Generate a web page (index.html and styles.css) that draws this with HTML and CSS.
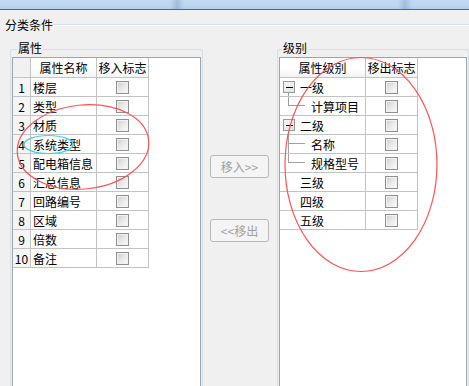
FILE: index.html
```html
<!DOCTYPE html>
<html>
<head>
<meta charset="utf-8">
<link rel="stylesheet" href="styles.css">
</head>
<body>
<div class="window">
  <div class="titlebar"></div>
  <div class="outer-head"><span class="outer-title">分类条件</span><span class="outer-rule"></span></div>
  <div class="groups">
    <section class="group group-left">
      <div class="group-head"><span class="gh-corner"></span><span class="gh-label">属性</span><span class="gh-rule"></span></div>
      <div class="group-body">
        <div class="listview">
          <div class="grid grid-left">
            <div class="hd rh"></div><div class="hd">属性名称</div><div class="hd">移入标志</div>
            <div class="rh">1</div><div class="name">楼层</div><div class="flag"><span class="chk"></span></div>
            <div class="rh">2</div><div class="name">类型</div><div class="flag"><span class="chk"></span></div>
            <div class="rh">3</div><div class="name">材质</div><div class="flag"><span class="chk"></span></div>
            <div class="rh">4</div><div class="name">系统类型</div><div class="flag"><span class="chk"></span></div>
            <div class="rh">5</div><div class="name">配电箱信息</div><div class="flag"><span class="chk"></span></div>
            <div class="rh">6</div><div class="name">汇总信息</div><div class="flag"><span class="chk"></span></div>
            <div class="rh">7</div><div class="name">回路编号</div><div class="flag"><span class="chk"></span></div>
            <div class="rh">8</div><div class="name">区域</div><div class="flag"><span class="chk"></span></div>
            <div class="rh">9</div><div class="name">倍数</div><div class="flag"><span class="chk"></span></div>
            <div class="rh">10</div><div class="name">备注</div><div class="flag"><span class="chk"></span></div>
          </div>
        </div>
      </div>
    </section>
    <div class="middle">
      <button class="btn" disabled>移入&gt;&gt;</button>
      <button class="btn" disabled>&lt;&lt;移出</button>
    </div>
    <section class="group group-right">
      <div class="group-head"><span class="gh-corner"></span><span class="gh-label">级别</span><span class="gh-rule"></span></div>
      <div class="group-body">
        <div class="listview">
          <div class="grid grid-right">
            <div class="hd">属性级别</div><div class="hd">移出标志</div>

            <div class="lvl"><span class="toggle"><i class="sp"></i><span class="box"><i class="minus"></i></span><i class="stem"></i></span><span class="txt parent">一级</span></div>
            <div class="flag"><span class="chk"></span></div>

            <div class="lvl"><span class="elbow"><i class="up"></i><i class="down"></i></span><span class="txt child">计算项目</span></div>
            <div class="flag"><span class="chk"></span></div>

            <div class="lvl"><span class="toggle"><i class="sp"></i><span class="box"><i class="minus"></i></span><i class="stem"></i></span><span class="txt parent">二级</span></div>
            <div class="flag"><span class="chk"></span></div>

            <div class="lvl"><span class="elbow tee"><i class="up"></i><i class="down"></i></span><span class="txt child">名称</span></div>
            <div class="flag"><span class="chk"></span></div>

            <div class="lvl"><span class="elbow"><i class="up"></i><i class="down"></i></span><span class="txt child">规格型号</span></div>
            <div class="flag"><span class="chk"></span></div>

            <div class="lvl leaf"><span class="txt">三级</span></div>
            <div class="flag"><span class="chk"></span></div>

            <div class="lvl leaf"><span class="txt">四级</span></div>
            <div class="flag"><span class="chk"></span></div>

            <div class="lvl leaf"><span class="txt">五级</span></div>
            <div class="flag"><span class="chk"></span></div>
          </div>
        </div>
      </div>
    </section>
  </div>
  <svg class="marks" width="469" height="386" viewBox="0 0 469 386">
    <ellipse cx="83" cy="147" rx="66" ry="42" transform="rotate(-6 83 147)" fill="none" stroke="#ff5252" stroke-width="1.2"/>
    <ellipse cx="48.5" cy="144.5" rx="24.5" ry="9" fill="none" stroke="#3fd3e0" stroke-width="1.2"/>
    <ellipse cx="361" cy="164.5" rx="76" ry="107" fill="none" stroke="#ff5252" stroke-width="1.2"/>
  </svg>
</div>
</body>
</html>
```

FILE: styles.css
```css
* { box-sizing: border-box; }
html, body { margin: 0; padding: 0; }
body {
  background: #f0f0f0;
  font-family: "Noto Sans CJK SC", "Noto Sans", sans-serif;
  font-size: 12px;
  color: #000;
}
.window {
  position: relative;
  width: 469px;
  height: 386px;
  overflow: hidden;
  background: #f0f0f0;
}
.titlebar {
  height: 10px;
  border-bottom: 1px solid #5d6670;
  background:
    linear-gradient(90deg, transparent 170px, rgba(110,140,180,.35) 177px, transparent 184px, transparent 398px, rgba(110,140,180,.35) 405px, transparent 412px),
    linear-gradient(#c4daf3, #bcd5f1 60%, #b3cfee);
}
.outer-head {
  display: flex;
  margin-top: 8px;
  height: 14px;
  line-height: 14px;
}
.outer-title { padding-left: 5px; }
.outer-rule {
  flex: 1;
  margin-top: 6px;
  height: 0;
  border-top: 1px solid #d5dfe5;
  box-shadow: 0 1px 0 #fff;
}
.groups {
  display: flex;
  margin-top: 9px;
  margin-left: 10px;
}
.group-left { width: 193px; }
.group-right { width: 192px; }
.group-head {
  display: flex;
  height: 14px;
  line-height: 14px;
}
.gh-corner {
  width: 7px;
  margin-top: 8px;
  border-top: 1px solid #d5dfe5;
  border-left: 1px solid #d5dfe5;
  border-top-left-radius: 3px;
}
.group-right .gh-corner { width: 5px; }
.gh-label { padding: 0 1px; }
.gh-rule {
  flex: 1;
  margin-top: 8px;
  border-top: 1px solid #d5dfe5;
  border-right: 1px solid #d5dfe5;
  border-top-right-radius: 3px;
}
.group-body {
  height: 340px;
  padding: 2px 1px 0;
  border-left: 1px solid #d5dfe5;
  border-right: 1px solid #d5dfe5;
}
.listview {
  height: 100%;
  background: #fff;
  border: 1px solid #9da3aa;
}
.grid {
  display: grid;
  width: max-content;
}
.grid-left { grid-template-columns: 18px 66px 52px; }
.grid-right { grid-template-columns: 86px 52px; }
.grid > div {
  height: 19px;
  display: flex;
  align-items: center;
  border-right: 1px solid #c3c3c3;
  border-bottom: 1px solid #c3c3c3;
  white-space: nowrap;
}
.grid > .hd {
  height: 20px;
  justify-content: center;
  background: linear-gradient(#ffffff 0%, #ffffff 55%, #f3f4f6 100%);
}
.grid > .rh {
  justify-content: center;
  background: #f5f5f5;
}
.grid > .hd.rh { background: #f1f1f1; }
.grid > .name { padding-left: 2px; }
.grid > .flag { justify-content: center; }
.chk {
  display: block;
  width: 13px;
  height: 13px;
  border: 1px solid #8e8f8f;
  background: linear-gradient(135deg, #cdcdcd 0%, #e9e9e9 50%, #fcfcfc 100%);
  box-shadow: inset 0 0 0 1px #f2f2f2;
}
.grid > .lvl { align-items: stretch; }
.grid > .lvl.leaf { padding-left: 20px; align-items: center; }
.txt { align-self: center; }
.txt.parent { margin-left: 5px; }
.txt.child { margin-left: 6px; }
.toggle {
  display: flex;
  flex-direction: column;
  align-items: flex-start;
  width: 12px;
  margin-left: 3px;
}
.toggle .sp { flex: 1; }
.toggle .stem {
  flex: 1;
  margin-left: 5px;
  border-left: 1px solid #a0a0a0;
}
.box {
  display: flex;
  align-items: center;
  justify-content: center;
  width: 12px;
  height: 12px;
  border: 1px solid #9a9a9a;
  background: linear-gradient(135deg, #f6f6f6 0%, #e2e2e2 100%);
}
.minus {
  display: block;
  width: 7px;
  height: 1px;
  background: #000;
}
.elbow {
  display: flex;
  flex-direction: column;
  width: 17px;
  margin-left: 8px;
}
.elbow .up {
  height: 9px;
  border-left: 1px solid #a0a0a0;
  border-bottom: 1px solid #a0a0a0;
}
.elbow .down { flex: 1; }
.elbow.tee .down { border-left: 1px solid #a0a0a0; }
.middle {
  width: 74px;
  display: flex;
  flex-direction: column;
  align-items: flex-start;
  gap: 41px;
  padding-top: 114px;
  padding-left: 7px;
}
.btn {
  width: 59px;
  height: 23px;
  padding: 0;
  font-family: "Noto Sans CJK SC", "Noto Sans", sans-serif;
  font-size: 12px;
  color: #a0a0a0;
  background: #f4f4f4;
  border: 1px solid #b8b8b8;
  border-radius: 3px;
}
.marks {
  position: absolute;
  left: 0;
  top: 0;
  pointer-events: none;
}
```
